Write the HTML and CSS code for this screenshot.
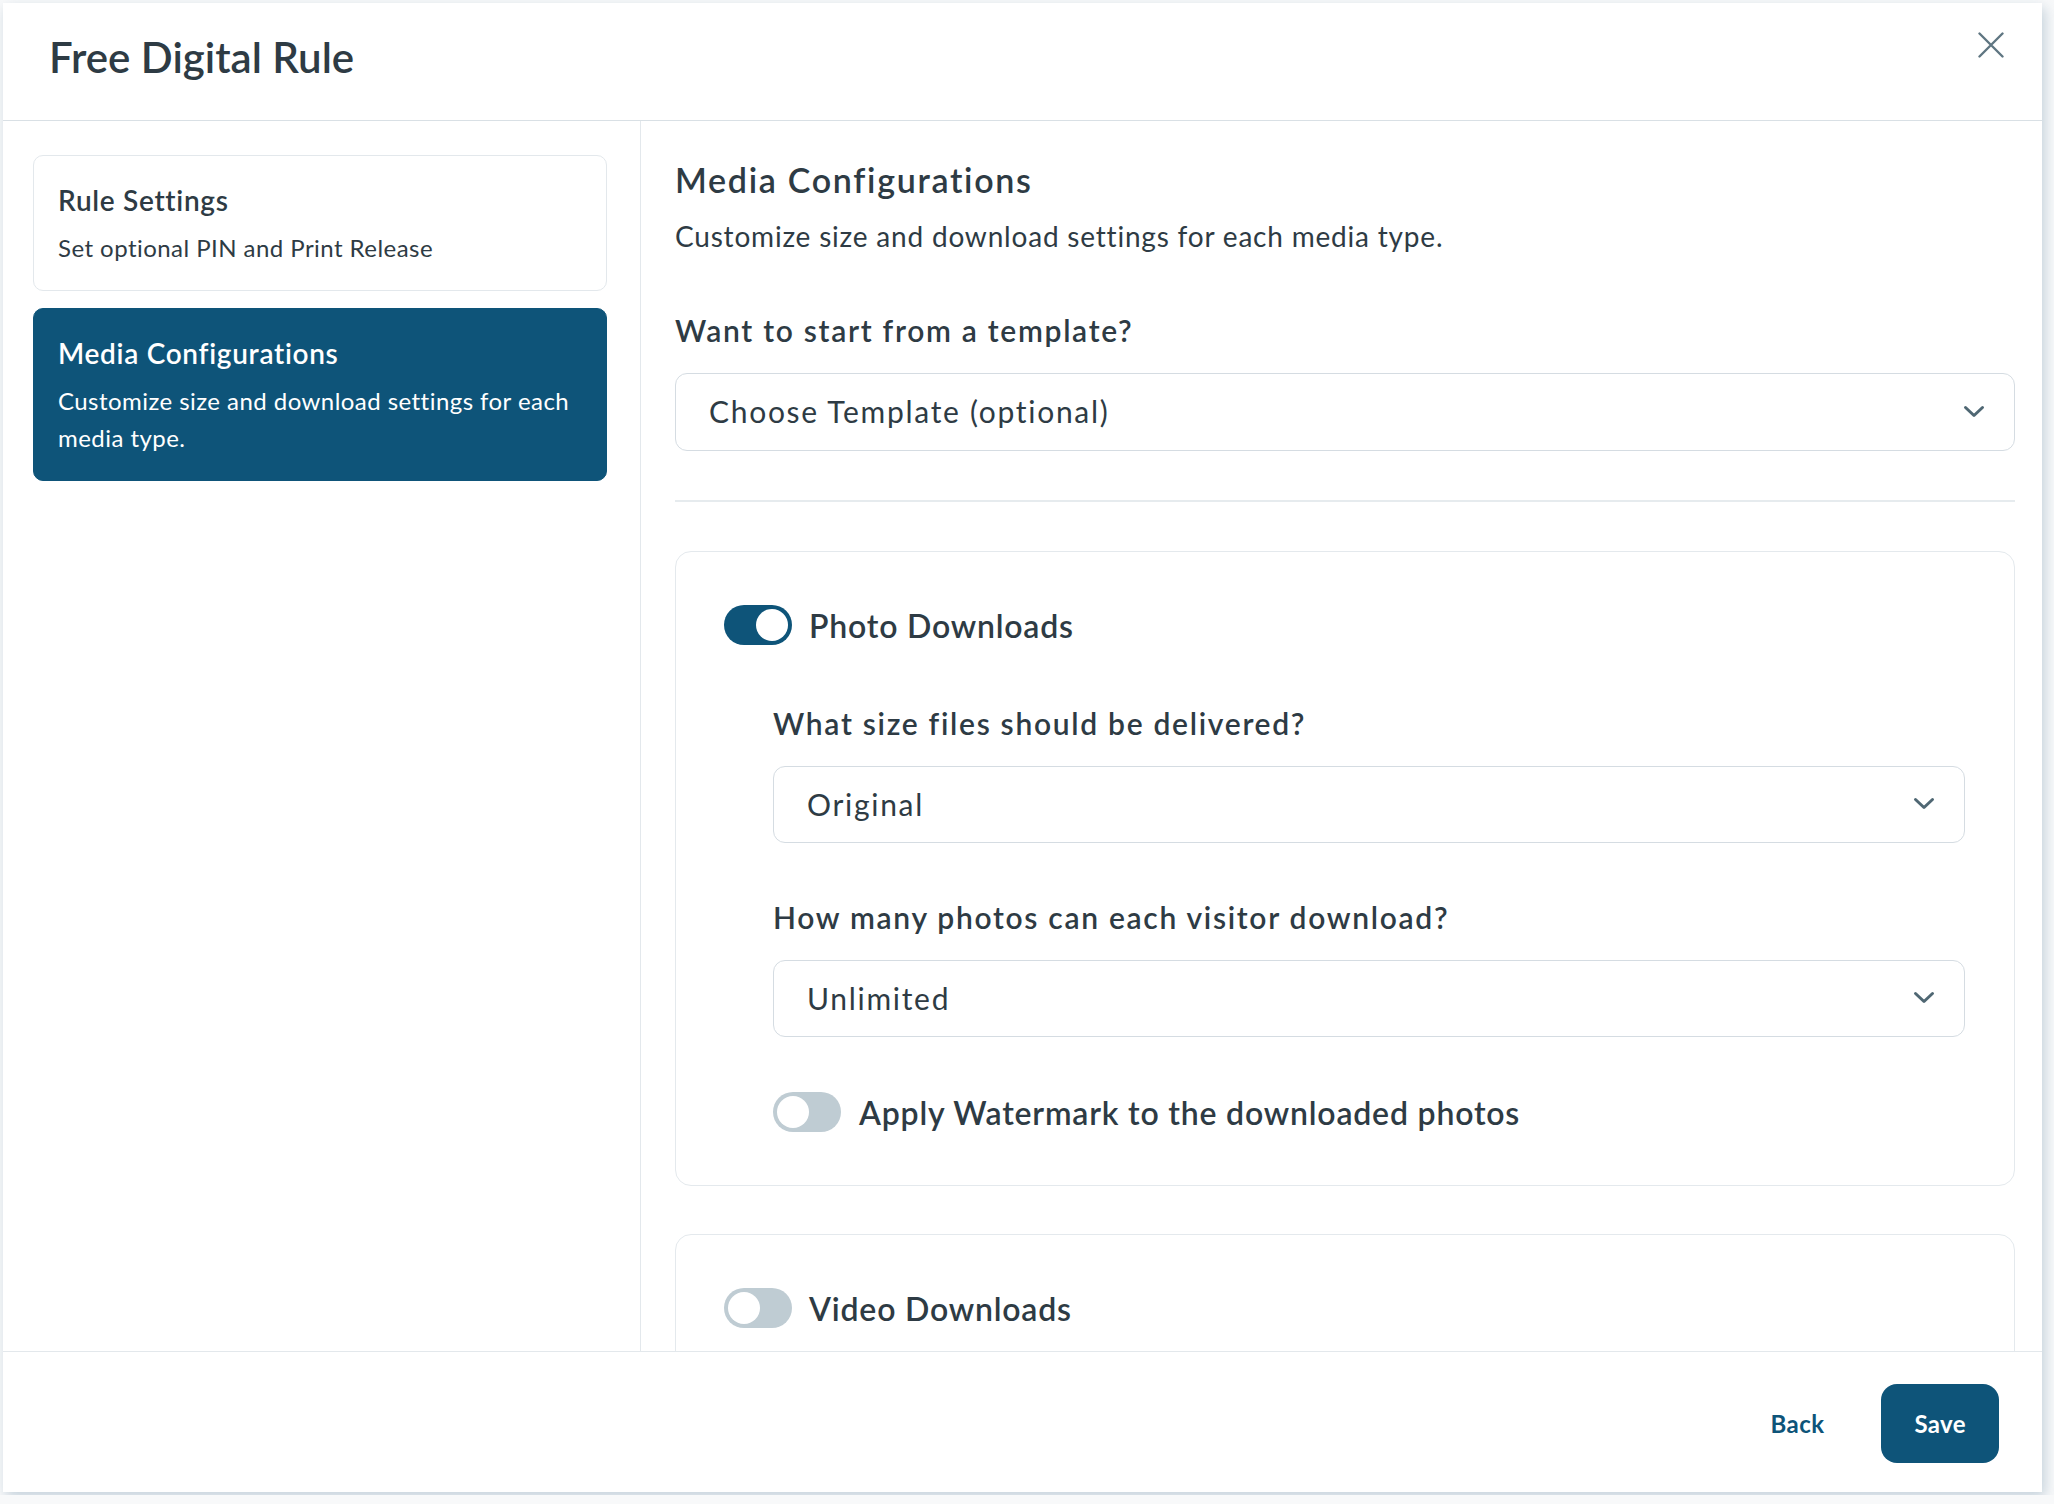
FILE: index.html
```html
<!DOCTYPE html>
<html lang="en">

<head>
    <meta charset="UTF-8">
    <meta name="viewport" content="width=device-width, initial-scale=1.0">
    <title>Free Digital Rule</title>
    <link rel="stylesheet" href="styles.css">
</head>

<body>
    <div class="rule-modal">
        <header class="rule-modal-header">
            <h1 class="rule-modal-title">Free Digital Rule</h1>
            <button class="rule-modal-close" aria-label="Close">
                <svg width="26" height="26" viewBox="0 0 26 26">
                    <path d="M1.5 1.5L24.5 24.5M24.5 1.5L1.5 24.5" stroke="#5f7682" stroke-width="2.4" stroke-linecap="round" />
                </svg>
            </button>
        </header>

        <div class="rule-modal-body">
            <nav class="rule-steps">
                <div class="rule-step">
                    <div class="rule-step-title">Rule Settings</div>
                    <div class="rule-step-text">Set optional PIN and Print Release</div>
                </div>
                <div class="rule-step active">
                    <div class="rule-step-title">Media Configurations</div>
                    <div class="rule-step-text">Customize size and download settings for each media type.</div>
                </div>
            </nav>

            <main class="rule-content">
                <h2 class="section-title">Media Configurations</h2>
                <p class="section-text">Customize size and download settings for each media type.</p>

                <label class="field-label">Want to start from a template?</label>
                <div class="select-box">
                    <span>Choose Template (optional)</span>
                    <svg class="select-arrow" width="22" height="13" viewBox="0 0 22 13">
                        <path d="M2.5 2.5L11 10.5L19.5 2.5" fill="none" stroke="#4f6773" stroke-width="3" stroke-linecap="round" stroke-linejoin="round" />
                    </svg>
                </div>

                <hr class="section-divider">

                <section class="media-card">
                    <div class="toggle-row">
                        <span class="toggle on"></span>
                        <span class="toggle-label">Photo Downloads</span>
                    </div>
                    <div class="media-options">
                        <label class="field-label">What size files should be delivered?</label>
                        <div class="select-box">
                            <span>Original</span>
                            <svg class="select-arrow" width="22" height="13" viewBox="0 0 22 13">
                                <path d="M2.5 2.5L11 10.5L19.5 2.5" fill="none" stroke="#4f6773" stroke-width="3" stroke-linecap="round" stroke-linejoin="round" />
                            </svg>
                        </div>

                        <label class="field-label">How many photos can each visitor download?</label>
                        <div class="select-box">
                            <span>Unlimited</span>
                            <svg class="select-arrow" width="22" height="13" viewBox="0 0 22 13">
                                <path d="M2.5 2.5L11 10.5L19.5 2.5" fill="none" stroke="#4f6773" stroke-width="3" stroke-linecap="round" stroke-linejoin="round" />
                            </svg>
                        </div>

                        <div class="toggle-row watermark-row">
                            <span class="toggle"></span>
                            <span class="toggle-label">Apply Watermark to the downloaded photos</span>
                        </div>
                    </div>
                </section>

                <section class="media-card">
                    <div class="toggle-row">
                        <span class="toggle"></span>
                        <span class="toggle-label">Video Downloads</span>
                    </div>
                </section>
            </main>
        </div>

        <footer class="rule-modal-footer">
            <button class="btn-link">Back</button>
            <button class="btn-primary">Save</button>
        </footer>
    </div>
</body>

</html>
```

FILE: styles.css
```css
/* Modal de regra digital */
body {
    margin: 0;
    padding: 3px;
    background-color: #f8f9fa;
    font-family: "Lato", "Open Sans", sans-serif;
    color: #2e3b44;
    overflow: hidden;
}

.rule-modal {
    width: 2039px;
    height: 1489px;
    background-color: #fff;
    display: flex;
    flex-direction: column;
    box-shadow: 3px 5px 12px rgba(80, 120, 150, 0.3);
}

/* Cabeçalho */
.rule-modal-header {
    height: 118px;
    box-sizing: border-box;
    padding: 29px 38px 0 46px;
    display: flex;
    justify-content: space-between;
    align-items: flex-start;
    border-bottom: 1px solid #d9e0e5;
}

.rule-modal-title {
    margin: 0;
    font-size: 42px;
    font-weight: 600;
    line-height: 50px;
}

.rule-modal-close {
    background: none;
    border: none;
    padding: 0;
    width: 26px;
    height: 26px;
    cursor: pointer;
}

/* Corpo */
.rule-modal-body {
    flex: 1;
    display: flex;
    min-height: 0;
}

.rule-steps {
    width: 638px;
    box-sizing: border-box;
    padding: 34px 33px 0 30px;
    border-right: 1px solid #e3e8ec;
    flex: none;
}

.rule-step {
    border: 1px solid #e3e8ec;
    border-radius: 10px;
    padding: 27px 14px 24px 24px;
}

.rule-step + .rule-step {
    margin-top: 17px;
}

.rule-step-title {
    font-size: 28px;
    font-weight: 600;
    line-height: 34px;
    letter-spacing: 0.7px;
}

.rule-step-text {
    margin-top: 12px;
    font-size: 24px;
    line-height: 37px;
    letter-spacing: 0.45px;
}

.rule-step.active {
    background-color: #0e5479;
    border-color: #0e5479;
    color: #fff;
}

.rule-content {
    flex: 1;
    padding: 38px 27px 0 34px;
    overflow-y: auto;
    scrollbar-width: none;
}

.section-title {
    margin: 0;
    font-size: 34px;
    font-weight: 600;
    line-height: 41px;
    letter-spacing: 1.7px;
}

.section-text {
    margin: 19px 0 0;
    font-size: 28px;
    line-height: 34px;
    letter-spacing: 0.8px;
}

.field-label {
    display: block;
    margin-top: 59px;
    font-size: 30px;
    font-weight: 600;
    line-height: 36px;
    letter-spacing: 1.7px;
}

.select-box {
    margin-top: 25px;
    height: 78px;
    box-sizing: border-box;
    border: 1.5px solid #d5dce2;
    border-radius: 12px;
    padding: 0 29px 2px 33px;
    display: flex;
    align-items: center;
    justify-content: space-between;
    font-size: 30px;
    line-height: 36px;
    letter-spacing: 1.7px;
}

.select-arrow {
    flex: none;
}

.section-divider {
    margin: 49px 0 0;
    border: none;
    border-top: 2px solid #e6ebee;
}

/* Cartões de mídia */
.media-card {
    margin-top: 49px;
    border: 1px solid #e4e9ed;
    border-radius: 16px;
    padding: 53px 49px 53px 48px;
}

.media-card + .media-card {
    margin-top: 48px;
}

.media-options {
    padding-left: 49px;
    padding-top: 4px;
}

.media-options .field-label {
    margin-top: 56px;
}

.media-options .select-box {
    height: 77px;
}

.toggle-row {
    display: flex;
    align-items: center;
    gap: 17px;
}

.watermark-row {
    margin-top: 55px;
    gap: 18px;
}

.toggle {
    flex: none;
    width: 68px;
    height: 40px;
    box-sizing: border-box;
    padding: 4px;
    border-radius: 20px;
    background-color: #bfccd3;
    display: flex;
}

.toggle::after {
    content: "";
    width: 32px;
    height: 32px;
    border-radius: 50%;
    background-color: #fff;
}

.toggle.on {
    background-color: #0e5479;
    justify-content: flex-end;
}

.toggle-label {
    font-size: 32px;
    font-weight: 600;
    line-height: 39px;
    letter-spacing: 0.8px;
}

/* Rodapé */
.rule-modal-footer {
    height: 141px;
    box-sizing: border-box;
    padding: 3px 43px 0 0;
    border-top: 1px solid #e3e8ec;
    display: flex;
    justify-content: flex-end;
    align-items: center;
    gap: 24px;
}

.btn-link,
.btn-primary {
    font-family: inherit;
    font-size: 24px;
    font-weight: 700;
    letter-spacing: 0.4px;
    height: 79px;
    padding: 0 33px;
    border: none;
    border-radius: 16px;
    cursor: pointer;
}

.btn-link {
    background: none;
    color: #0e5479;
}

.btn-primary {
    background-color: #0e5479;
    color: #fff;
}
```
